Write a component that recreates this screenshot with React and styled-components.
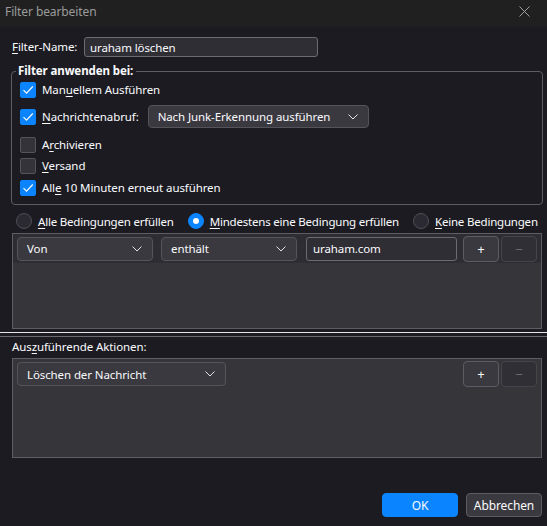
import React from "react";
import styled, { createGlobalStyle } from "styled-components";

const GlobalStyle = createGlobalStyle`
  html, body {
    margin: 0;
    padding: 0;
    background: #1c1b22;
  }
  body {
    font-family: "Noto Sans", "Open Sans", sans-serif;
    font-size: 11.5px;
    letter-spacing: -0.1px;
    color: #fbfbfe;
  }
  * {
    box-sizing: border-box;
  }
`;

const Dialog = styled.div`
  width: 547px;
  height: 526px;
  display: flex;
  flex-direction: column;
  background: #1c1b22;
  overflow: hidden;
`;

const TitleBar = styled.div`
  height: 27px;
  flex: none;
  display: flex;
  align-items: center;
  justify-content: space-between;
  padding: 0 17px 4px 5px;
  background: #202020;
  color: #9c9c9c;
  font-size: 12px;
`;

const Content = styled.div`
  flex: 1;
  display: flex;
  flex-direction: column;
  padding: 10px 4px 0 11px;
`;

const NameRow = styled.div`
  display: flex;
  align-items: center;
  height: 20px;
  padding-left: 1px;
`;

const Label = styled.span`
  width: 72px;
  line-height: 16px;
`;

const Key = styled.u`
  text-decoration-thickness: 1px;
  text-underline-offset: 2px;
`;

const TextInput = styled.div`
  width: ${(p) => p.$w}px;
  height: ${(p) => p.$h || 20}px;
  margin-left: ${(p) => p.$ml || 0}px;
  display: flex;
  align-items: center;
  padding-left: ${(p) => p.$pad || 5}px;
  background: #2f2e35;
  border: 1px solid #6c6b72;
  border-radius: 3px;
  white-space: nowrap;
`;

const GroupBox = styled.fieldset`
  margin: 6px 0 0 0;
  padding: 0 8px 6px 8px;
  width: 532px;
  border: 1px solid #5e5d64;
  border-radius: 4px;
`;

const Legend = styled.legend`
  margin-left: -4px;
  padding: 0 3px 0 2px;
  font-weight: bold;
  line-height: 16px;
`;

const CheckRow = styled.div`
  display: flex;
  align-items: center;
  height: ${(p) => p.$h || 21}px;
  margin-top: ${(p) => p.$mt || 0}px;
  gap: 6px;
`;

const Box = styled.span`
  width: 16px;
  height: 16px;
  flex: none;
  display: flex;
  align-items: center;
  justify-content: center;
  border-radius: 2px;
  background: ${(p) => (p.$checked ? "#0a84ff" : "#34333a")};
  border: 1px solid ${(p) => (p.$checked ? "#0a84ff" : "#55545b")};
`;

const SelectBox = styled.div`
  width: ${(p) => p.$w}px;
  height: ${(p) => p.$h || 24}px;
  flex: none;
  display: flex;
  align-items: center;
  justify-content: space-between;
  padding: 0 10px 0 9px;
  margin-left: ${(p) => p.$ml || 0}px;
  background: #3a3940;
  border: 1px solid #55545b;
  border-radius: 4px;
  white-space: nowrap;
`;

const RadioRow = styled.div`
  display: flex;
  align-items: center;
  height: 22px;
  margin-top: 5px;
  padding-left: 5px;
  gap: 14px;
  letter-spacing: -0.2px;
`;

const RadioItem = styled.label`
  display: flex;
  align-items: center;
  gap: 6px;
  white-space: nowrap;
`;

const RadioDot = styled.span`
  width: 16px;
  height: 16px;
  flex: none;
  border-radius: 50%;
  display: flex;
  align-items: center;
  justify-content: center;
  background: ${(p) => (p.$on ? "#0a84ff" : "#2b2a33")};
  border: 1px solid ${(p) => (p.$on ? "#0a84ff" : "#4f4e55")};

  &::after {
    content: "";
    display: ${(p) => (p.$on ? "block" : "none")};
    width: 6px;
    height: 6px;
    border-radius: 50%;
    background: #fbfbfe;
  }
`;

const ListBox = styled.div`
  width: 530px;
  height: ${(p) => p.$h}px;
  margin: ${(p) => p.$mt}px 0 0 1px;
  flex: none;
  background: #36353a;
  border: 1px solid #5e5d63;
`;

const ListRow = styled.div`
  display: flex;
  align-items: center;
  height: 29px;
  padding: ${(p) => p.$top || 0}px 4px 0 4px;
  background: ${(p) => (p.$band ? "#2e2d33" : "transparent")};
`;

const Spacer = styled.div`
  flex: 1;
`;

const SmallButton = styled.div`
  width: 36px;
  height: 26px;
  flex: none;
  display: flex;
  align-items: center;
  justify-content: center;
  margin-left: ${(p) => p.$ml || 0}px;
  border-radius: 4px;
  font-size: 13px;
  background: ${(p) => (p.$disabled ? "#302f35" : "#3a3940")};
  border: 1px solid ${(p) => (p.$disabled ? "#45444b" : "#5d5c63")};
  color: ${(p) => (p.$disabled ? "#6c6b71" : "#fbfbfe")};
`;

const Splitter = styled.div`
  height: 5px;
  margin: 3px -4px 0 -11px;
  border-top: 1px solid #e6e6ea;
  border-bottom: 1px solid #6a6970;
`;

const SectionLabel = styled.div`
  line-height: 16px;
  margin-top: 2px;
  padding-left: 1px;
`;

const Footer = styled.div`
  display: flex;
  justify-content: flex-end;
  gap: 8px;
  padding: 0 5px 9px 0;
`;

const DialogButton = styled.div`
  width: 76px;
  height: 24px;
  display: flex;
  align-items: center;
  justify-content: center;
  border-radius: 4px;
  background: ${(p) => (p.$primary ? "#0a84ff" : "#3a3940")};
  border: 1px solid ${(p) => (p.$primary ? "#0a84ff" : "#5d5c63")};
  color: #fbfbfe;
  font-size: 12px;
`;

const Chevron = () => (
  <svg width="10" height="6" viewBox="0 0 10 6">
    <path d="M0.5 0.5 L5 5 L9.5 0.5" fill="none" stroke="#e4e4e8" strokeWidth="1" />
  </svg>
);

const CloseIcon = () => (
  <svg width="11" height="11" viewBox="0 0 11 11">
    <path d="M0.5 0.5 L10.5 10.5 M10.5 0.5 L0.5 10.5" stroke="#a0a0a0" strokeWidth="1" />
  </svg>
);

const Check = ({ checked }) => (
  <Box $checked={checked}>
    {checked && (
      <svg width="12" height="10" viewBox="0 0 12 10">
        <path d="M1.5 5.2 L4.5 8.2 L10.8 1.5" fill="none" stroke="#fbfbfe" strokeWidth="1.2" />
      </svg>
    )}
  </Box>
);

const Select = ({ label, ...rest }) => (
  <SelectBox {...rest}>
    <span>{label}</span>
    <Chevron />
  </SelectBox>
);

export default function App() {
  return (
    <>
      <GlobalStyle />
      <Dialog>
        <TitleBar>
          <span>Filter bearbeiten</span>
          <CloseIcon />
        </TitleBar>

        <Content>
          <NameRow>
            <Label>
              <Key>F</Key>ilter-Name:
            </Label>
            <TextInput $w={234} $pad={5}>uraham löschen</TextInput>
          </NameRow>

          <GroupBox>
            <Legend>Filter anwenden bei:</Legend>
            <CheckRow>
              <Check checked />
              <span>
                Man<Key>u</Key>ellem Ausführen
              </span>
            </CheckRow>
            <CheckRow $h={27} $mt={3}>
              <Check checked />
              <span>
                <Key>N</Key>achrichtenabruf:
              </span>
              <Select $w={221} $h={23} $ml={3} label="Nach Junk-Erkennung ausführen" />
            </CheckRow>
            <CheckRow $mt={4}>
              <Check />
              <span>
                A<Key>r</Key>chivieren
              </span>
            </CheckRow>
            <CheckRow>
              <Check />
              <span>
                <Key>V</Key>ersand
              </span>
            </CheckRow>
            <CheckRow $mt={1}>
              <Check checked />
              <span>
                All<Key>e</Key> 10 Minuten erneut ausführen
              </span>
            </CheckRow>
          </GroupBox>

          <RadioRow>
            <RadioItem>
              <RadioDot />
              <span>
                <Key>A</Key>lle Bedingungen erfüllen
              </span>
            </RadioItem>
            <RadioItem>
              <RadioDot $on />
              <span>
                <Key>M</Key>indestens eine Bedingung erfüllen
              </span>
            </RadioItem>
            <RadioItem>
              <RadioDot />
              <span>
                <Key>K</Key>eine Bedingungen
              </span>
            </RadioItem>
          </RadioRow>

          <ListBox $h={96} $mt={1}>
            <ListRow $band>
              <Select $w={136} label="Von" />
              <Select $w={136} $ml={8} label="enthält" />
              <TextInput $w={151} $h={24} $pad={6} $ml={9}>
                uraham.com
              </TextInput>
              <Spacer />
              <SmallButton>+</SmallButton>
              <SmallButton $ml={2} $disabled>
                −
              </SmallButton>
            </ListRow>
          </ListBox>

          <Splitter />

          <SectionLabel>
            Aus<Key>z</Key>uführende Aktionen:
          </SectionLabel>

          <ListBox $h={100} $mt={3}>
            <ListRow $top={1}>
              <Select $w={209} label="Löschen der Nachricht" />
              <Spacer />
              <SmallButton>+</SmallButton>
              <SmallButton $ml={2} $disabled>
                −
              </SmallButton>
            </ListRow>
          </ListBox>
        </Content>

        <Footer>
          <DialogButton $primary>OK</DialogButton>
          <DialogButton>Abbrechen</DialogButton>
        </Footer>
      </Dialog>
    </>
  );
}
